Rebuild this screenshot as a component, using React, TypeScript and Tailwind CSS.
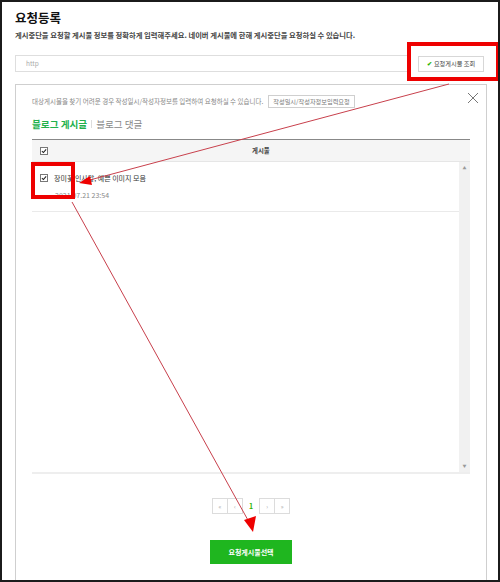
import React from "react";

const KR = { fontFamily: '"Noto Sans CJK KR", "Noto Sans", sans-serif' };

function Check() {
  return (
    <span className="inline-flex h-[8px] w-[8px] items-center justify-center border border-[#777] bg-white">
      <svg width="6" height="6" viewBox="0 0 10 10">
        <path d="M1.5 5.2 L4 7.6 L8.6 2.2" fill="none" stroke="#222" strokeWidth="1.8" />
      </svg>
    </span>
  );
}

function PageBox({ children }: { children: React.ReactNode }) {
  return (
    <span className="-ml-px flex h-[16px] w-[16px] items-center justify-center border border-[#dcdcdc] text-[6px] text-[#aaa] first:ml-0">
      {children}
    </span>
  );
}

export default function App() {
  return (
    <div
      className="relative h-[582px] w-[500px] overflow-hidden border-2 border-[#1b1b1b] bg-white px-[13px] text-[#333]"
      style={KR}
    >
      <div className="pt-[8px] text-[12.5px] font-bold leading-[16px] text-[#111]">요청등록</div>
      <div className="mt-[5px] text-[7.3px] font-bold leading-[9px] text-[#444]">
        게시중단을 요청할 게시물 정보를 정확하게 입력해주세요. 네이버 게시물에 한해 게시중단을 요청하실 수 있습니다.
      </div>

      <div className="mt-[15px] flex items-center gap-[10px]">
        <div className="flex h-[17px] flex-1 items-center border border-[#dedede] pl-[10px] text-[6.5px] text-[#aaa]">
          http
        </div>
        <div className="mr-[1px] flex h-[16px] w-[66px] items-center justify-center gap-[2px] border border-[#d7d7d7] text-[6.2px] text-[#444]">
          <span className="text-[6px] font-bold text-[#2db400]">✔</span>
          <span>요청게시물 조회</span>
        </div>
      </div>

      <div className="relative mt-[12px] h-[520px] w-[472px] border border-b-0 border-[#cfcfcf] px-[16px] pt-[10px]">
        <div className="flex items-center gap-[5px]">
          <span className="text-[6.5px] text-[#888]">
            대상게시물을 찾기 어려운 경우 작성일시/작성자정보를 입력하여 요청하실 수 있습니다.
          </span>
          <span className="flex h-[13px] items-center border border-[#cfcfcf] px-[4px] text-[6.2px] text-[#777]">
            작성일시/작성자정보입력요청
          </span>
        </div>
        <svg className="absolute right-[7px] top-[7px]" width="12" height="12" viewBox="0 0 12 12">
          <path d="M1 1 L11 11 M11 1 L1 11" stroke="#777" strokeWidth="1" />
        </svg>

        <div className="mt-[10px] flex items-center text-[9.6px] font-bold leading-[12px]">
          <span className="text-[#22b14c]">블로그 게시글</span>
          <span className="mx-[4px] h-[8px] w-px bg-[#ddd]" />
          <span className="font-normal text-[#888]">블로그 댓글</span>
        </div>

        <div className="mt-[9px] w-[438px]">
          <div className="relative flex h-[23px] items-center border-t border-b border-t-[#888] border-b-[#e6e6e6] bg-[#f5f5f5] pl-[8px]">
            <Check />
            <span className="absolute left-[220px] text-[6.4px] font-bold text-[#444]">게시물</span>
          </div>
          <div className="flex h-[312px] border-b-2 border-[#eeeeee]">
            <div className="flex-1">
              <div className="h-[50px] border-b border-[#eaeaea] pl-[8px] pt-[11px]">
                <div className="flex items-center gap-[6px]">
                  <Check />
                  <span className="text-[7px] text-[#333]">장미꽃 인사말, 예쁜 이미지 모음</span>
                </div>
                <div className="ml-[15px] mt-[6px] text-[7px] text-[#888]">2021.07.21 23:54</div>
              </div>
            </div>
            <div className="flex w-[11px] flex-col items-center justify-between bg-[#f1f1f1] py-[3px] text-[4px] text-[#999]">
              <span>▲</span>
              <span>▼</span>
            </div>
          </div>
        </div>

        <div className="mt-[24px] flex items-center justify-center">
          <div className="flex">
            <PageBox>«</PageBox>
            <PageBox>‹</PageBox>
          </div>
          <span className="mx-[6px] text-[7px] font-bold text-[#2db400]">1</span>
          <div className="flex">
            <PageBox>›</PageBox>
            <PageBox>»</PageBox>
          </div>
        </div>

        <div className="mt-[26px] flex justify-center">
          <div className="flex h-[24px] w-[82px] items-center justify-center bg-[#1fb61f] text-[7px] font-bold text-white">
            요청게시물선택
          </div>
        </div>
      </div>

      {/* annotations */}
      <div className="absolute left-[405px] top-[40px] h-[39px] w-[93px] border-[4px] border-[#ee0000]" />
      <div className="absolute left-[29px] top-[160px] h-[37px] w-[44px] border-[4px] border-[#ee0000]" />
      <svg className="pointer-events-none absolute left-0 top-0" width="500" height="582" viewBox="-2 -2 500 582">
        <line x1="445" y1="80" x2="82" y2="177" stroke="#c8404c" strokeWidth="1" />
        <polygon points="75,179 86,172 88,181" fill="#ee0000" />
        <line x1="68" y1="198" x2="245" y2="518" stroke="#c8404c" strokeWidth="1" />
        <polygon points="249,528 240,516 252,512" fill="#ee0000" />
      </svg>
    </div>
  );
}
